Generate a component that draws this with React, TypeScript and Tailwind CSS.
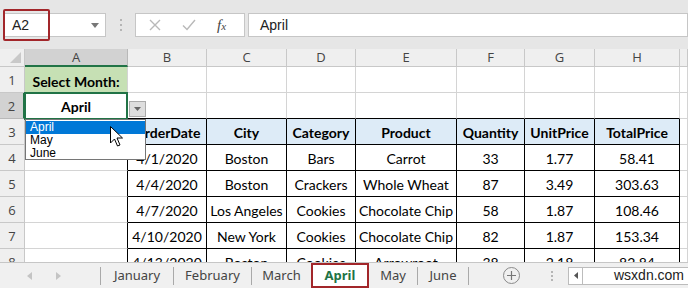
import clsx from "clsx"

const rows = [
  ["4/1/2020", "Boston", "Bars", "Carrot", "33", "1.77", "58.41"],
  ["4/4/2020", "Boston", "Crackers", "Whole Wheat", "87", "3.49", "303.63"],
  ["4/7/2020", "Los Angeles", "Cookies", "Chocolate Chip", "58", "1.87", "108.46"],
  ["4/10/2020", "New York", "Cookies", "Chocolate Chip", "82", "1.87", "153.34"],
  ["4/13/2020", "Boston", "Cookies", "Arrowroot", "38", "2.18", "82.84"],
]

const headers = ["OrderDate", "City", "Category", "Product", "Quantity", "UnitPrice", "TotalPrice"]
const letters = ["A", "B", "C", "D", "E", "F", "G", "H", ""]

const grid = "border-r border-b border-[#d4d4d4]"
const table = "border-r border-b border-black"

const Cell = ({
  className,
  children,
}: {
  className?: string
  children?: React.ReactNode
}) => (
  <div className={clsx("flex items-center justify-center overflow-hidden whitespace-nowrap", className)}>
    {children}
  </div>
)

const RowHead = ({ n, active }: { n: number; active?: boolean }) => (
  <div
    className={clsx(
      "flex items-center justify-center border-b border-r font-['Open_Sans',sans-serif] text-[13px] text-[#444]",
      active
        ? "border-r-2 border-b-[#b8b8b8] border-r-[#217346] bg-[#d2d2d2]"
        : "border-[#c8c8c8] bg-[#efefef]",
    )}
  >
    <span className="pt-[3px]">{n}</span>
  </div>
)

const Cursor = () => (
  <svg width="13" height="21" viewBox="0 0 13 21" className="block">
    <path
      d="M0.5 0.5 L0.5 17 L4.5 13 L7.5 20 L10 19 L7 12 L12.5 12 Z"
      fill="white"
      stroke="black"
      strokeWidth="1"
      strokeLinejoin="round"
    />
  </svg>
)

const FormulaBar = () => (
  <div className="relative flex h-[49px] items-start bg-[#e6e6e6] pt-[13px]">
    <div className="ml-[4px] flex h-[24px] w-[102px] items-center justify-between border border-[#c6c6c6] bg-white pl-[7px] pr-[6px] font-['Liberation_Sans',sans-serif] text-[14px] text-[#222]">
      <span>A2</span>
      <svg width="8" height="5" viewBox="0 0 8 5">
        <path d="M0 0 H8 L4 5 Z" fill="#777" />
      </svg>
    </div>
    <div className="ml-[14px] mt-[6px] flex flex-col gap-[3px]">
      <span className="size-[2px] bg-[#b5b5b5]" />
      <span className="size-[2px] bg-[#b5b5b5]" />
      <span className="size-[2px] bg-[#b5b5b5]" />
    </div>
    <div className="ml-[13px] flex h-[24px] w-[110px] items-center border border-[#c6c6c6] bg-white">
      <svg width="12" height="12" viewBox="0 0 12 12" className="ml-[13px]">
        <path d="M1 1 L11 11 M11 1 L1 11" stroke="#b9b9b9" strokeWidth="1.4" />
      </svg>
      <svg width="14" height="12" viewBox="0 0 14 12" className="ml-[21px]">
        <path d="M1 6.5 L5 10.5 L13 1" stroke="#b9b9b9" strokeWidth="1.4" fill="none" />
      </svg>
      <span className="ml-[21px] font-['Liberation_Serif',serif] text-[15px] italic text-[#444]">
        f<span className="text-[11px]">x</span>
      </span>
    </div>
    <div className="ml-[3px] flex h-[24px] flex-1 items-center border border-[#c6c6c6] bg-white pl-[11px] font-['Liberation_Sans',sans-serif] text-[14px] text-[#222]">
      April
    </div>
    <div className="absolute left-[3px] top-[9px] h-[32px] w-[47px] rounded-[2px] border-2 border-[#a2262a]" />
  </div>
)

const Sheet = () => (
  <div className="relative h-[213px] overflow-hidden bg-white">
    <div className="grid grid-cols-[25px_103px_79px_80px_69px_101px_68px_70px_85px_8px] grid-rows-[18px_26px_26px_26px_26px_26px_26px_26px_26px] font-['Lato',sans-serif] text-[14px] text-black">
      {/* column headers */}
      <div className="relative border-b border-r border-[#c8c8c8] bg-[#efefef]">
        <svg width="11" height="11" viewBox="0 0 11 11" className="absolute bottom-[3px] right-[3px]">
          <path d="M11 0 V11 H0 Z" fill="#c9c9c9" />
        </svg>
      </div>
      {letters.map((l, i) => (
        <div
          key={i}
          className={clsx(
            "flex items-center justify-center border-r pt-px font-['Open_Sans',sans-serif] text-[13px] text-[#444]",
            i === 0
              ? "border-b-2 border-b-[#217346] border-r-[#b8b8b8] bg-[#d2d2d2]"
              : "border-b border-[#c8c8c8] bg-[#efefef]",
          )}
        >
          {l}
        </div>
      ))}

      {/* row 1 */}
      <RowHead n={1} />
      <Cell className={clsx(grid, "bg-[#c6e0b4] pt-[3px] font-bold")}>Select Month:</Cell>
      {Array.from({ length: 8 }).map((_, i) => (
        <Cell key={i} className={grid} />
      ))}

      {/* row 2 */}
      <RowHead n={2} active />
      <div className="relative">
        <Cell className={clsx(grid, "h-full pt-[2px] font-bold")}>April</Cell>
        <div className="absolute -left-px -top-px bottom-[-1px] right-0 border-2 border-[#217346]" />
      </div>
      {Array.from({ length: 7 }).map((_, i) => (
        <Cell key={i} className="border-b border-r border-[#d4d4d4] border-b-black" />
      ))}
      <Cell className={grid} />

      {/* row 3 */}
      <RowHead n={3} />
      <Cell className="border-b border-r border-[#d4d4d4] border-r-black" />
      {headers.map((h) => (
        <Cell key={h} className={clsx(table, "bg-[#ddebf7] pt-[2px] font-bold")}>
          {h}
        </Cell>
      ))}
      <Cell className={grid} />

      {/* data rows */}
      {rows.map((r, ri) => (
        <div key={ri} className="contents">
          <RowHead n={ri + 4} />
          <Cell className="border-b border-r border-[#d4d4d4] border-r-black" />
          {r.map((v, ci) => (
            <Cell key={ci} className={clsx(table, "pt-[2px]")}>
              {v}
            </Cell>
          ))}
          <Cell className={grid} />
        </div>
      ))}
    </div>

    {/* validation dropdown button */}
    <div className="absolute left-[129px] top-[52px] flex h-[16px] w-[17px] items-center justify-center border border-[#ababab] bg-[#dedede]">
      <svg width="7" height="4" viewBox="0 0 7 4">
        <path d="M0 0 H7 L3.5 4 Z" fill="#666" />
      </svg>
    </div>

    {/* dropdown list */}
    <div className="absolute left-[25px] top-[70px] flex h-[41px] w-[121px] flex-col border border-[#767676] bg-white py-px font-['Liberation_Sans',sans-serif] text-[12px] leading-[13px] text-black">
      <div className="bg-[#0078d7] pl-[4px] text-white">April</div>
      <div className="pl-[4px]">May</div>
      <div className="pl-[4px]">June</div>
    </div>

    <div className="absolute left-[110px] top-[77px]">
      <Cursor />
    </div>
  </div>
)

const Sep = () => <span className="h-[18px] w-px bg-[#a9a9a9]" />

const Tab = ({ label, w }: { label: string; w: string }) => (
  <div className={clsx("flex items-center justify-center", w)}>{label}</div>
)

const TabStrip = () => (
  <div className="relative flex h-[26px] items-center border-t border-[#c6c6c6] bg-[#f0f0f0] font-['Noto_Sans',sans-serif] text-[13px] text-[#444]">
    <div className="flex w-[100px] items-center pl-[27px]">
      <svg width="5" height="8" viewBox="0 0 5 8">
        <path d="M5 0 V8 L0 4 Z" fill="#c4c4c4" />
      </svg>
      <svg width="5" height="8" viewBox="0 0 5 8" className="ml-[24px]">
        <path d="M0 0 V8 L5 4 Z" fill="#c4c4c4" />
      </svg>
    </div>
    <Sep />
    <Tab label="January" w="w-[72px]" />
    <Sep />
    <Tab label="February" w="w-[77px]" />
    <Sep />
    <Tab label="March" w="w-[59px]" />
    <div className="relative flex h-[25px] w-[58px] items-center justify-center bg-white font-bold text-[#217346]">
      April
      <div className="absolute inset-0 border-2 border-[#a2262a]" />
    </div>
    <Tab label="May" w="w-[48px]" />
    <Sep />
    <Tab label="June" w="w-[50px]" />
    <Sep />
    <div className="ml-[34px] flex size-[17px] items-center justify-center rounded-full border border-[#8a8a8a]">
      <svg width="9" height="9" viewBox="0 0 9 9">
        <path d="M4.5 0 V9 M0 4.5 H9" stroke="#777" strokeWidth="1.2" />
      </svg>
    </div>
    <div className="ml-[31px] flex flex-col gap-[2px]">
      <span className="size-[2px] bg-[#b5b5b5]" />
      <span className="size-[2px] bg-[#b5b5b5]" />
      <span className="size-[2px] bg-[#b5b5b5]" />
    </div>
    <div className="ml-[15px] flex h-[18px] flex-1 items-center border border-r-0 border-[#bcbcbc] bg-white">
      <div className="flex h-full w-[14px] items-center justify-center border-r border-[#bcbcbc]">
        <svg width="4" height="7" viewBox="0 0 4 7">
          <path d="M4 0 V7 L0 3.5 Z" fill="#555" />
        </svg>
      </div>
      <div className="flex-1 pl-[31px] font-['Liberation_Sans',sans-serif] text-[14px] text-[#222]">wsxdn.com</div>
    </div>
  </div>
)

export default function App() {
  return (
    <div className="flex h-[288px] w-[688px] flex-col overflow-hidden bg-white">
      <FormulaBar />
      <Sheet />
      <TabStrip />
    </div>
  )
}
